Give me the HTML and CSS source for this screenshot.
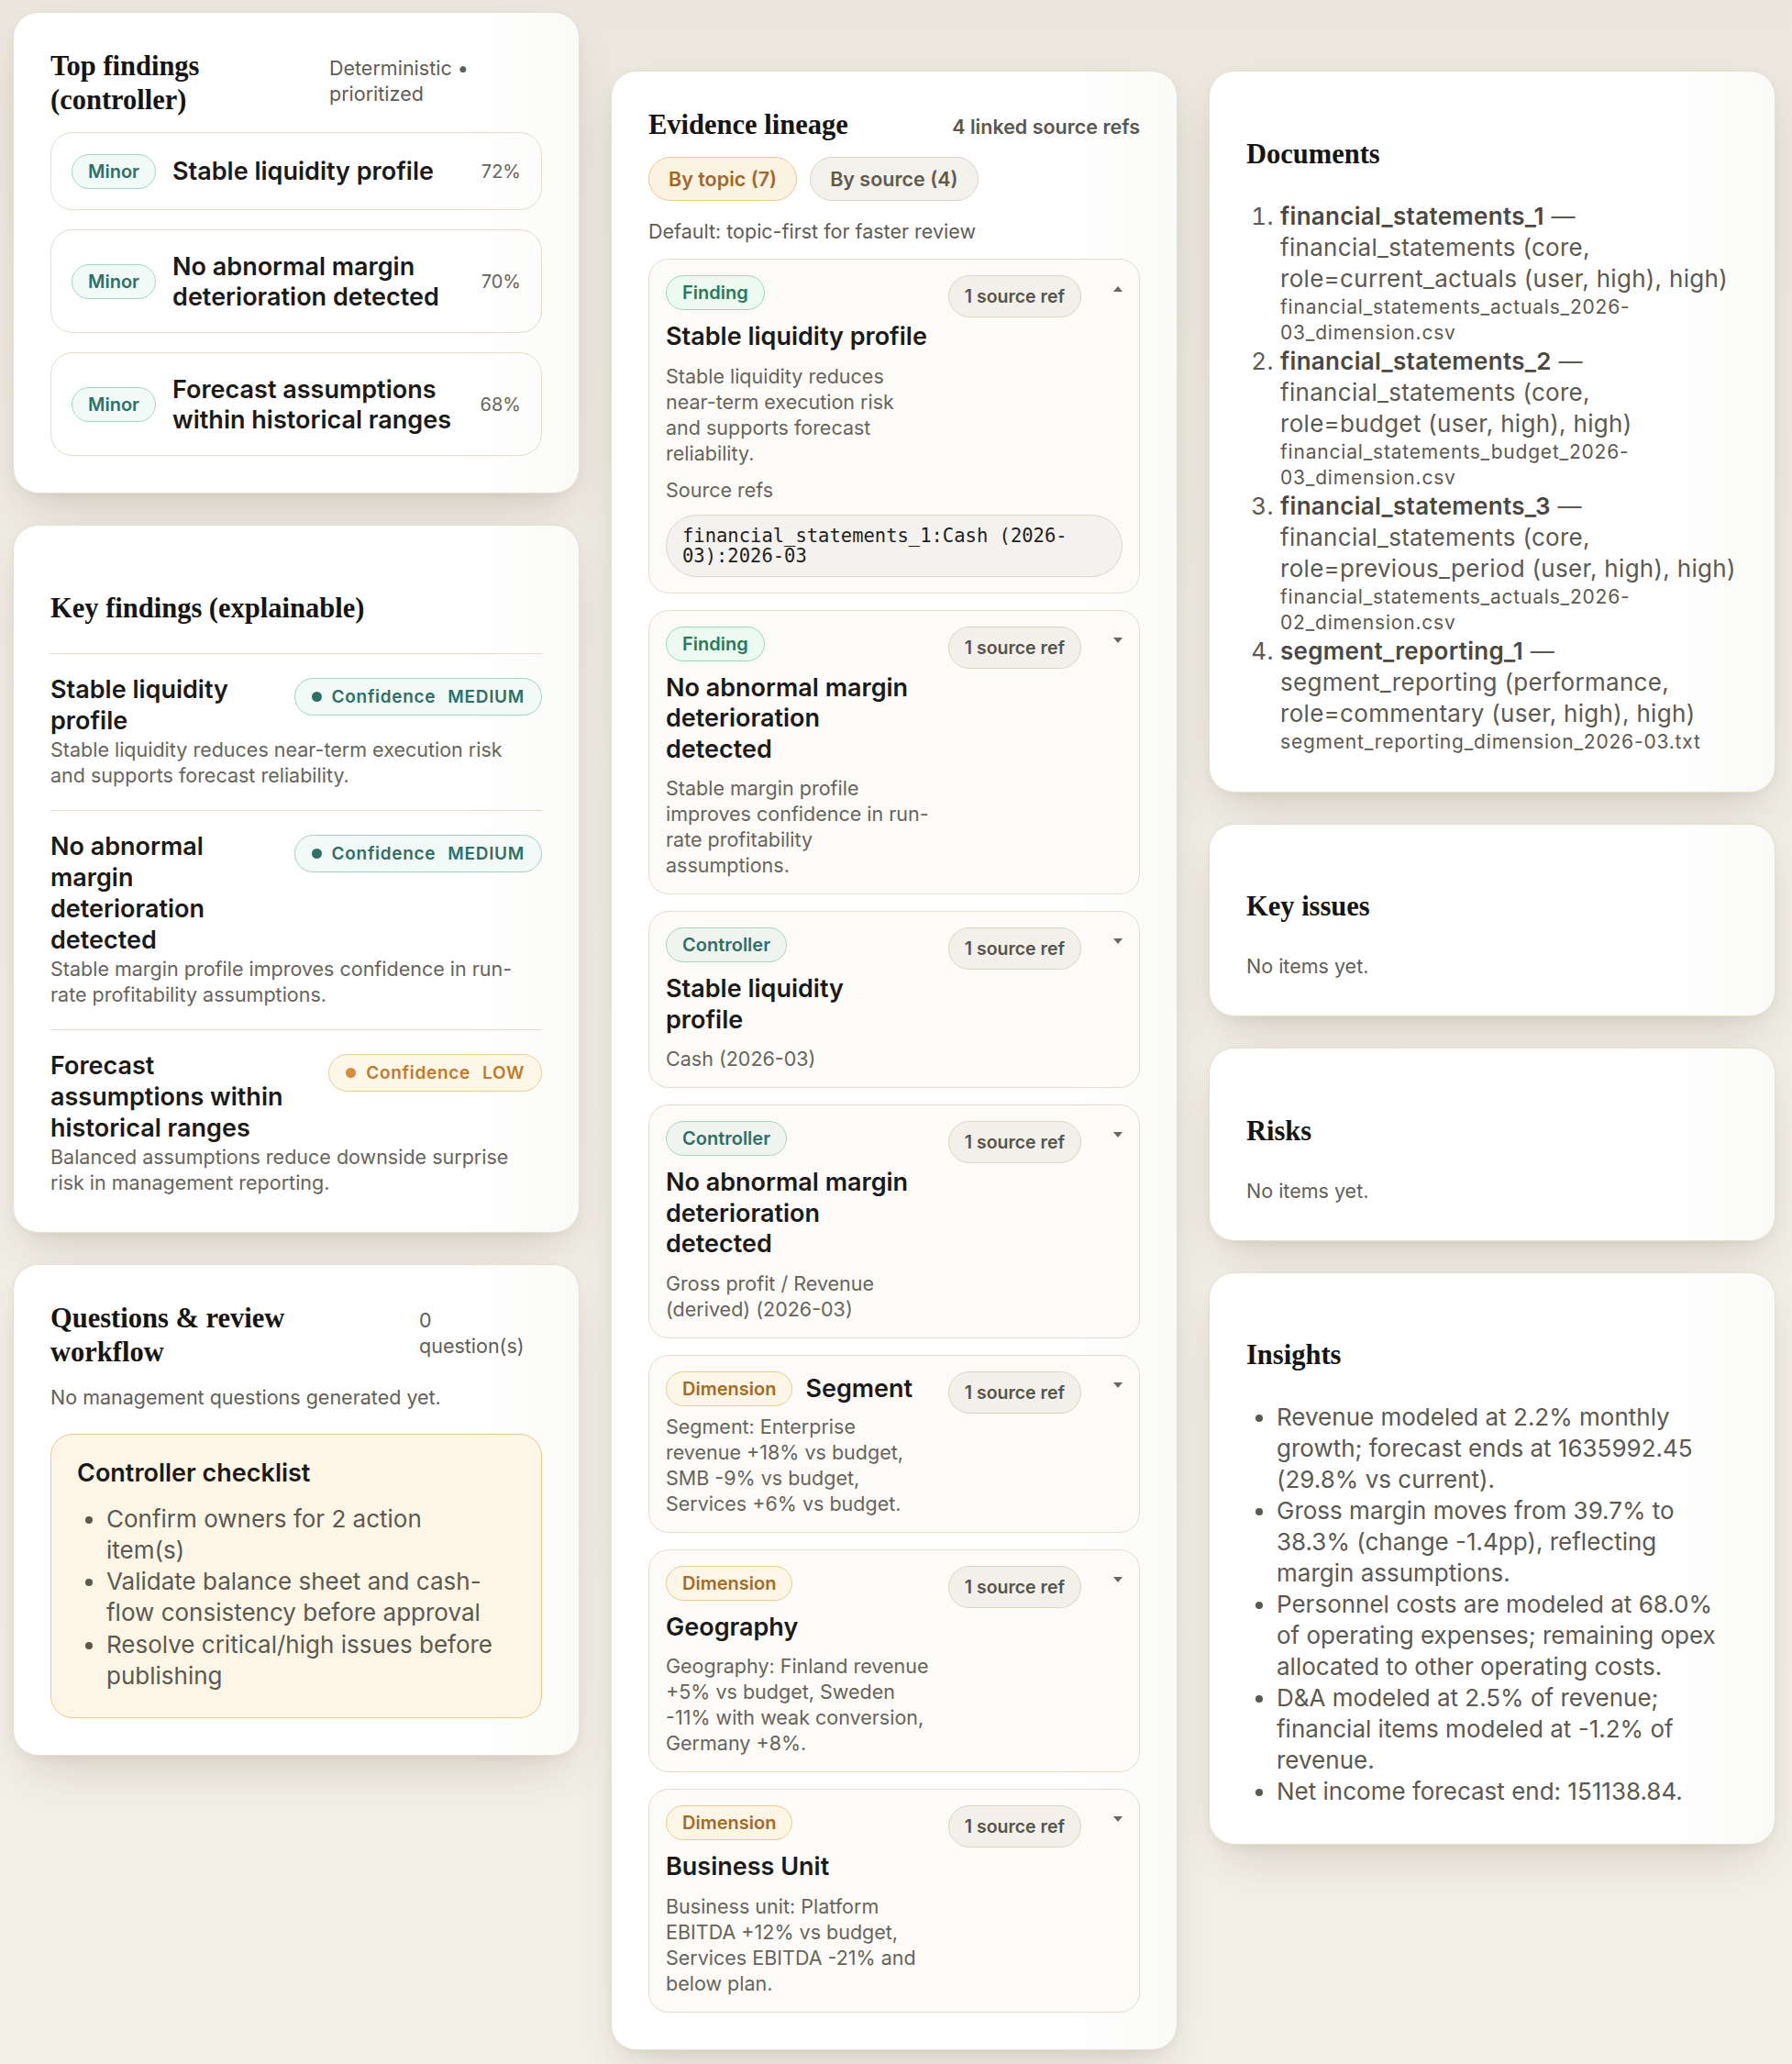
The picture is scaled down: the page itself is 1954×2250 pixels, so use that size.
FILE: index.html
```html
<!DOCTYPE html>
<html lang="en">
<head>
<meta charset="utf-8">
<title>Controller review</title>
<link rel="stylesheet" href="styles.css">
</head>
<body>
<main class="board">

  <!-- Left column -->
  <div class="column">
    <section class="card">
      <header class="card-head">
        <h2 class="card-title">Top findings (controller)</h2>
        <span class="card-meta card-meta--stack">Deterministic • prioritized</span>
      </header>
      <ul class="top-list">
        <li class="top-row">
          <span class="pill pill--minor">Minor</span>
          <span class="top-title">Stable liquidity profile</span>
          <span class="top-pct">72%</span>
        </li>
        <li class="top-row">
          <span class="pill pill--minor">Minor</span>
          <span class="top-title">No abnormal margin deterioration detected</span>
          <span class="top-pct">70%</span>
        </li>
        <li class="top-row">
          <span class="pill pill--minor">Minor</span>
          <span class="top-title">Forecast assumptions within historical ranges</span>
          <span class="top-pct">68%</span>
        </li>
      </ul>
    </section>

    <section class="card">
      <h2 class="card-title card-title--solo">Key findings (explainable)</h2>
      <ul class="kf-list">
        <li class="kf-item">
          <div class="kf-head">
            <h3 class="kf-title">Stable liquidity profile</h3>
            <span class="confidence confidence--medium"><i class="dot"></i>Confidence<span class="level">MEDIUM</span></span>
          </div>
          <p class="kf-desc">Stable liquidity reduces near-term execution risk and supports forecast reliability.</p>
        </li>
        <li class="kf-item">
          <div class="kf-head">
            <h3 class="kf-title">No abnormal margin deterioration detected</h3>
            <span class="confidence confidence--medium"><i class="dot"></i>Confidence<span class="level">MEDIUM</span></span>
          </div>
          <p class="kf-desc">Stable margin profile improves confidence in run-rate profitability assumptions.</p>
        </li>
        <li class="kf-item">
          <div class="kf-head">
            <h3 class="kf-title">Forecast assumptions within historical ranges</h3>
            <span class="confidence confidence--low"><i class="dot"></i>Confidence<span class="level">LOW</span></span>
          </div>
          <p class="kf-desc">Balanced assumptions reduce downside surprise risk in management reporting.</p>
        </li>
      </ul>
    </section>

    <section class="card">
      <header class="card-head">
        <h2 class="card-title">Questions &amp; review workflow</h2>
        <span class="card-meta card-meta--count">0 question(s)</span>
      </header>
      <p class="muted muted--spaced">No management questions generated yet.</p>
      <div class="checklist">
        <h4 class="checklist-title">Controller checklist</h4>
        <ul class="checklist-items">
          <li>Confirm owners for 2 action item(s)</li>
          <li>Validate balance sheet and cash-flow consistency before approval</li>
          <li>Resolve critical/high issues before publishing</li>
        </ul>
      </div>
    </section>
  </div>

  <!-- Middle column -->
  <div class="column column--offset">
    <section class="card">
      <header class="card-head">
        <h2 class="card-title">Evidence lineage</h2>
        <span class="card-meta card-meta--strong">4 linked source refs</span>
      </header>
      <div class="tabs">
        <button class="tab tab--active" type="button">By topic (7)</button>
        <button class="tab" type="button">By source (4)</button>
      </div>
      <p class="hint">Default: topic-first for faster review</p>

      <div class="ev-list">
        <article class="ev-item ev-item--open">
          <div class="ev-main">
            <div class="ev-top">
              <span class="pill pill--finding">Finding</span>
              <h3 class="ev-title">Stable liquidity profile</h3>
            </div>
            <p class="ev-desc">Stable liquidity reduces near-term execution risk and supports forecast reliability.</p>
          </div>
          <div class="ev-side">
            <span class="src-count">1 source ref</span>
            <span class="caret caret--up"></span>
          </div>
          <div class="ev-refs">
            <p class="ref-label">Source refs</p>
            <code class="ref-code">financial_statements_1:Cash (2026-03):2026-03</code>
          </div>
        </article>

        <article class="ev-item">
          <div class="ev-main">
            <div class="ev-top">
              <span class="pill pill--finding">Finding</span>
              <h3 class="ev-title">No abnormal margin deterioration detected</h3>
            </div>
            <p class="ev-desc">Stable margin profile improves confidence in run-rate profitability assumptions.</p>
          </div>
          <div class="ev-side">
            <span class="src-count">1 source ref</span>
            <span class="caret"></span>
          </div>
        </article>

        <article class="ev-item">
          <div class="ev-main">
            <div class="ev-top">
              <span class="pill pill--controller">Controller</span>
              <h3 class="ev-title">Stable liquidity profile</h3>
            </div>
            <p class="ev-desc">Cash (2026-03)</p>
          </div>
          <div class="ev-side">
            <span class="src-count">1 source ref</span>
            <span class="caret"></span>
          </div>
        </article>

        <article class="ev-item">
          <div class="ev-main">
            <div class="ev-top">
              <span class="pill pill--controller">Controller</span>
              <h3 class="ev-title">No abnormal margin deterioration detected</h3>
            </div>
            <p class="ev-desc">Gross profit / Revenue (derived) (2026-03)</p>
          </div>
          <div class="ev-side">
            <span class="src-count">1 source ref</span>
            <span class="caret"></span>
          </div>
        </article>

        <article class="ev-item">
          <div class="ev-main">
            <div class="ev-top">
              <span class="pill pill--dimension">Dimension</span>
              <h3 class="ev-title">Segment</h3>
            </div>
            <p class="ev-desc ev-desc--tight">Segment: Enterprise revenue +18% vs budget, SMB -9% vs budget, Services +6% vs budget.</p>
          </div>
          <div class="ev-side">
            <span class="src-count">1 source ref</span>
            <span class="caret"></span>
          </div>
        </article>

        <article class="ev-item">
          <div class="ev-main">
            <div class="ev-top">
              <span class="pill pill--dimension">Dimension</span>
              <h3 class="ev-title">Geography</h3>
            </div>
            <p class="ev-desc">Geography: Finland revenue +5% vs budget, Sweden -11% with weak conversion, Germany +8%.</p>
          </div>
          <div class="ev-side">
            <span class="src-count">1 source ref</span>
            <span class="caret"></span>
          </div>
        </article>

        <article class="ev-item">
          <div class="ev-main">
            <div class="ev-top">
              <span class="pill pill--dimension">Dimension</span>
              <h3 class="ev-title">Business Unit</h3>
            </div>
            <p class="ev-desc">Business unit: Platform EBITDA +12% vs budget, Services EBITDA -21% and below plan.</p>
          </div>
          <div class="ev-side">
            <span class="src-count">1 source ref</span>
            <span class="caret"></span>
          </div>
        </article>
      </div>
    </section>
  </div>

  <!-- Right column -->
  <div class="column column--offset">
    <section class="card">
      <h2 class="card-title card-title--solo">Documents</h2>
      <ol class="doc-list">
        <li>
          <div class="doc-head"><span class="doc-name">financial_statements_1</span> —</div>
          <div class="doc-desc">financial_statements (core, role=current_actuals (user, high), high)</div>
          <div class="doc-file">financial_statements_actuals_2026-03_dimension.csv</div>
        </li>
        <li>
          <div class="doc-head"><span class="doc-name">financial_statements_2</span> —</div>
          <div class="doc-desc">financial_statements (core, role=budget (user, high), high)</div>
          <div class="doc-file">financial_statements_budget_2026-03_dimension.csv</div>
        </li>
        <li>
          <div class="doc-head"><span class="doc-name">financial_statements_3</span> —</div>
          <div class="doc-desc">financial_statements (core, role=previous_period (user, high), high)</div>
          <div class="doc-file">financial_statements_actuals_2026-02_dimension.csv</div>
        </li>
        <li>
          <div class="doc-head"><span class="doc-name">segment_reporting_1</span> —</div>
          <div class="doc-desc">segment_reporting (performance, role=commentary (user, high), high)</div>
          <div class="doc-file">segment_reporting_dimension_2026-03.txt</div>
        </li>
      </ol>
    </section>

    <section class="card">
      <h2 class="card-title card-title--solo">Key issues</h2>
      <p class="muted">No items yet.</p>
    </section>

    <section class="card">
      <h2 class="card-title card-title--solo">Risks</h2>
      <p class="muted">No items yet.</p>
    </section>

    <section class="card">
      <h2 class="card-title card-title--solo">Insights</h2>
      <ul class="insights">
        <li>Revenue modeled at 2.2% monthly growth; forecast ends at 1635992.45 (29.8% vs current).</li>
        <li>Gross margin moves from 39.7% to 38.3% (change -1.4pp), reflecting margin assumptions.</li>
        <li>Personnel costs are modeled at 68.0% of operating expenses; remaining opex allocated to other operating costs.</li>
        <li>D&amp;A modeled at 2.5% of revenue; financial items modeled at -1.2% of revenue.</li>
        <li>Net income forecast end: 151138.84.</li>
      </ul>
    </section>
  </div>

</main>
</body>
</html>
```

FILE: styles.css
```css
* { box-sizing: border-box; }

html, body { margin: 0; }

body {
  min-height: 2250px;
  background: linear-gradient(180deg, #ebe7de 0%, #f0ede5 40%, #f3f0e8 100%);
  font-family: Inter, "Noto Sans", sans-serif;
  color: #1c1b18;
}

/* ---------- layout ---------- */
.board {
  display: grid;
  grid-template-columns: repeat(3, 618px);
  column-gap: 34px;
  align-items: start;
  padding: 13px 0 0 14px;
}

.column {
  display: flex;
  flex-direction: column;
  gap: 34px;
}

.column--offset { margin-top: 64px; }

/* ---------- cards ---------- */
.card {
  background: linear-gradient(90deg, #ffffff 80%, #fafaf8 100%);
  border: 1.5px solid #e7dfcd;
  border-radius: 28px;
  padding: 40px 40px 40px;
  box-shadow: 0 26px 52px -16px rgba(78, 66, 36, 0.2), 0 3px 10px rgba(78, 66, 36, 0.05);
}

.card-head {
  display: flex;
  align-items: baseline;
  gap: 24px;
  margin-bottom: 16px;
}

.card-title {
  flex: 1 1 auto;
  margin: 0;
  font-family: "Liberation Serif", "Times New Roman", serif;
  font-weight: 700;
  font-size: 30.5px;
  line-height: 37px;
  color: #161512;
}

.card-title--solo { margin: 31.5px 0 32px; }

.card-meta {
  flex: 0 0 auto;
  font-size: 21.5px;
  line-height: 28px;
  color: #5f5c55;
}

.card-meta--stack { width: 232px; padding-right: 40px; }
.card-meta--count { width: 134px; padding-right: 12px; }
.card-meta--strong { font-weight: 600; color: #5a5750; }

.muted {
  margin: 0;
  font-size: 21.5px;
  line-height: 28px;
  color: #625f57;
}

.muted--spaced { margin-bottom: 26px; }

/* ---------- pills ---------- */
.pill {
  display: inline-flex;
  align-items: center;
  flex: 0 0 auto;
  height: 38px;
  padding: 0 17px;
  border: 1.5px solid;
  border-radius: 19px;
  font-size: 20px;
  font-weight: 600;
  white-space: nowrap;
}

.pill--minor { color: #2f7067; background: #f1faf7; border-color: #a3d5cc; }
.pill--finding { color: #2b7858; background: #ecfaf2; border-color: #94dcb9; }
.pill--controller { color: #2f6f66; background: #eff4f0; border-color: #a6d3ca; }
.pill--dimension { color: #a56a23; background: #fdf5e5; border-color: #efcb8e; }

/* ---------- top findings ---------- */
.top-list {
  list-style: none;
  margin: 0;
  padding: 0;
  display: flex;
  flex-direction: column;
  gap: 21px;
}

.top-row {
  display: flex;
  align-items: center;
  gap: 18px;
  padding: 22.5px 22px;
  border: 1.5px solid #e6dcc8;
  border-radius: 24px;
}

.top-title {
  flex: 1 1 auto;
  font-size: 27px;
  line-height: 33px;
  font-weight: 600;
  color: #1b1a17;
}

.top-pct {
  font-size: 20px;
  color: #67645c;
}

/* ---------- key findings ---------- */
.kf-list { list-style: none; margin: -2px 0 0; padding: 0; }

.kf-item {
  border-top: 1.5px solid #e6dcc8;
  padding: 22px 0 24px;
}

.kf-item:last-child { padding-bottom: 0; }

.kf-head {
  display: flex;
  justify-content: space-between;
  align-items: flex-start;
  gap: 8px;
}

.kf-title {
  margin: 0;
  max-width: 255px;
  font-size: 27px;
  line-height: 34px;
  font-weight: 600;
  color: #1b1a17;
}

.kf-desc {
  margin: 0;
  font-size: 21.5px;
  line-height: 28px;
  color: #67645b;
}

.confidence {
  display: inline-flex;
  align-items: center;
  flex: 0 0 auto;
  height: 41px;
  margin-top: 4px;
  padding: 0 18px;
  border: 1.5px solid;
  border-radius: 21px;
  font-size: 19px;
  font-weight: 600;
  letter-spacing: 0.7px;
  white-space: nowrap;
}

.confidence .dot {
  width: 11px;
  height: 11px;
  margin-right: 11px;
  border-radius: 50%;
  background: currentColor;
}

.confidence .level { margin-left: 13px; }

.confidence--medium { color: #2e6f66; background: #f1faf7; border-color: #9fd2c9; }
.confidence--low { color: #c27a28; background: #fdf7ea; border-color: #efcd8f; }
.confidence--low .dot { background: #d98a3a; }

/* ---------- checklist ---------- */
.checklist {
  padding: 26px 43px 28px 28px;
  border: 1.5px solid #efc988;
  border-radius: 24px;
  background: #fdf6e7;
}

.checklist-title {
  margin: 0 0 17px;
  font-size: 27px;
  line-height: 32px;
  font-weight: 600;
  color: #1b1a17;
}

.checklist-items {
  margin: 0;
  padding-left: 32px;
  font-size: 26px;
  line-height: 34.3px;
  color: #5b5950;
}

/* ---------- evidence lineage ---------- */
.tabs { display: flex; gap: 14px; }

.tab {
  height: 48px;
  padding: 0 21px;
  border: 1.5px solid #ddd6c6;
  border-radius: 24px;
  background: #f3f1ec;
  color: #5d5a52;
  font-family: Inter, "Noto Sans", sans-serif;
  font-size: 21.5px;
  font-weight: 600;
}

.tab--active { background: #fdf3e2; border-color: #efc787; color: #a2672a; }

.hint {
  margin: 19px 0 16px;
  font-size: 21.5px;
  line-height: 28px;
  color: #5f5c55;
}

.ev-list {
  display: flex;
  flex-direction: column;
  gap: 18px;
}

.ev-item {
  display: grid;
  grid-template-columns: 290px 1fr;
  column-gap: 10px;
  padding: 17px 18px;
  border: 1.5px solid #e6dcc8;
  border-radius: 22px;
  background: #fcfbf8;
}

.ev-top {
  display: flex;
  flex-wrap: wrap;
  align-items: center;
  gap: 12px 14px;
}

.ev-title {
  margin: 0;
  max-width: 280px;
  font-size: 27px;
  line-height: 33.5px;
  font-weight: 600;
  color: #1b1a17;
}

.ev-item--open .ev-title { max-width: none; }

.ev-desc {
  margin: 12px 0 0;
  font-size: 21.5px;
  line-height: 28px;
  color: #67645b;
}

.ev-item--open .ev-desc { max-width: 265px; }

.ev-desc--tight { margin-top: 8px; }

.ev-side {
  display: flex;
  align-items: flex-start;
  justify-content: flex-end;
  gap: 35px;
}

.src-count {
  display: inline-flex;
  align-items: center;
  height: 46px;
  padding: 0 17px;
  border: 1.5px solid #ddd3c0;
  border-radius: 23px;
  background: #f3f0ea;
  color: #57544c;
  font-size: 19.5px;
  font-weight: 600;
  white-space: nowrap;
}

.caret {
  flex: 0 0 auto;
  width: 0;
  height: 0;
  margin-top: 12px;
  border-left: 5px solid transparent;
  border-right: 5px solid transparent;
  border-top: 6px solid #6b665b;
}

.caret--up {
  border-top: 0;
  border-bottom: 6px solid #6b665b;
}

.ev-refs { grid-column: 1 / -1; }

.ref-label {
  margin: 12px 0 13px;
  font-size: 21.5px;
  line-height: 28px;
  color: #67645b;
}

.ref-code {
  display: block;
  padding: 11px 30px 11px 17px;
  border: 1.5px solid #ddd6c6;
  border-radius: 34px;
  background: #f4f2ee;
  font-family: "DejaVu Sans Mono", "Liberation Mono", monospace;
  font-size: 20.5px;
  line-height: 22px;
  color: #1f1e1b;
}

/* ---------- documents & insights ---------- */
.doc-list {
  margin: 0;
  padding-left: 37px;
  font-size: 26px;
  line-height: 34px;
  letter-spacing: 0.3px;
  color: #5c5950;
}

.doc-name { font-weight: 600; color: #4b4841; }

.doc-file {
  font-size: 21px;
  line-height: 28px;
  letter-spacing: 0.8px;
}

.insights {
  margin: 0;
  padding-left: 33px;
  font-size: 26px;
  line-height: 34px;
  color: #5c5950;
}
```
